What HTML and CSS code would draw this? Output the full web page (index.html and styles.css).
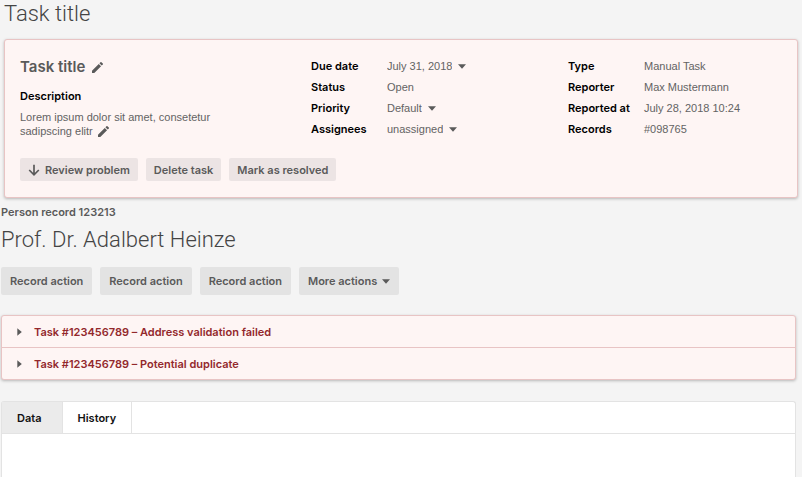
FILE: index.html
```html
<!DOCTYPE html>
<html lang="en">
<head>
<meta charset="utf-8">
<meta name="viewport" content="width=device-width, initial-scale=1">
<title>Task title</title>
<link rel="stylesheet" href="styles.css">
</head>
<body>
<svg class="sprite">
  <symbol id="pencil" viewBox="3 3 18 18"><path d="M3 17.250V21h3.750L17.810 9.940l-3.750-3.750L3 17.250zM20.710 7.040a1 1 0 0 0 0-1.410l-2.340-2.340a1 1 0 0 0-1.410 0l-1.830 1.830 3.750 3.750 1.830-1.830z"/></symbol>
  <symbol id="caret" viewBox="0 0 8 5"><path d="M0 .3H8L4 4.700Z"/></symbol>
  <symbol id="chevron" viewBox="0 0 5 8"><path d="M.3 .2V7.800L4.800 4Z"/></symbol>
  <symbol id="arrow-down" viewBox="0 0 12 12"><path d="M6 .8V10.500M1.200 6 6 10.800 10.800 6" fill="none" stroke="currentColor" stroke-width="1.700"/></symbol>
</svg>

<header class="page-head"><h1 class="heading">Task title</h1></header>

<main>
  <section class="task panel">
    <div class="task-grid">
      <div class="task-summary">
        <h2 class="task-title">Task title
          <button class="icon-button" type="button" aria-label="Edit title"><svg class="pencil"><use href="#pencil"/></svg></button>
        </h2>
        <h3 class="label">Description</h3>
        <p class="description">Lorem ipsum dolor sit amet, consetetur sadipscing elitr
          <button class="icon-button" type="button" aria-label="Edit description"><svg class="pencil"><use href="#pencil"/></svg></button>
        </p>
      </div>
      <div class="fields">
        <label class="label" for="due">Due date</label>
        <div class="value"><select id="due"><option>July 31, 2018</option></select><svg class="caret"><use href="#caret"/></svg></div>
        <span class="label">Status</span>
        <span class="value">Open</span>
        <label class="label" for="priority">Priority</label>
        <div class="value"><select id="priority"><option>Default</option></select><svg class="caret"><use href="#caret"/></svg></div>
        <label class="label" for="assignees">Assignees</label>
        <div class="value"><select id="assignees"><option>unassigned</option></select><svg class="caret"><use href="#caret"/></svg></div>
      </div>
      <div class="fields">
        <span class="label">Type</span><span class="value">Manual Task</span>
        <span class="label">Reporter</span><span class="value">Max Mustermann</span>
        <span class="label">Reported at</span><span class="value">July 28, 2018 10:24</span>
        <span class="label">Records</span><span class="value">#098765</span>
      </div>
    </div>
    <div class="actions task-actions">
      <button class="button" type="button"><svg class="arrow"><use href="#arrow-down"/></svg>Review problem</button>
      <button class="button" type="button">Delete task</button>
      <button class="button" type="button">Mark as resolved</button>
    </div>
  </section>

  <section class="record">
    <p class="record-id">Person record 123213</p>
    <h2 class="heading">Prof. Dr. Adalbert Heinze</h2>
    <div class="actions record-actions">
      <button class="button" type="button">Record action</button>
      <button class="button" type="button">Record action</button>
      <button class="button" type="button">Record action</button>
      <button class="button" type="button" aria-haspopup="menu">More actions<svg class="caret"><use href="#caret"/></svg></button>
    </div>

    <div class="panel issues">
      <details><summary><svg class="chevron"><use href="#chevron"/></svg>Task #123456789 – Address validation failed</summary></details>
      <details><summary><svg class="chevron"><use href="#chevron"/></svg>Task #123456789 – Potential duplicate</summary></details>
    </div>

    <div class="tabs">
      <div class="tab-list" role="tablist">
        <button class="tab tab-data" type="button" role="tab" aria-selected="false">Data</button>
        <button class="tab" type="button" role="tab" aria-selected="true">History</button>
      </div>
      <div class="tab-body" role="tabpanel"></div>
    </div>
  </section>
</main>
</body>
</html>
```
FILE: styles.css
```css
* { box-sizing: border-box; }

body {
  margin: 0;
  min-height: 100vh;
  display: flex;
  flex-direction: column;
  background: #f4f4f4;
  color: #5a5a5a;
  font: 11px/14px Inter, "Liberation Sans", sans-serif;
}

h1, h2, h3, p { margin: 0; }

button, select {
  margin: 0;
  padding: 0;
  border: 0;
  background: none;
  color: inherit;
  font: inherit;
}

svg { flex: none; fill: currentColor; }
.sprite { display: none; }

main, .record, .tabs {
  flex: 1;
  display: flex;
  flex-direction: column;
}
main { flex: 1 0 auto; }

.heading {
  color: #444;
  font-family: Roboto, "Liberation Sans", sans-serif;
  font-size: 22px;
  line-height: 26px;
  font-weight: 300;
}

.page-head { padding: 1px 4px 12px; }

.panel {
  border: 1px solid #e8c4c4;
  border-radius: 3px;
  background: #fef5f4;
  box-shadow: 0 1px 3px rgba(0, 0, 0, 0.25);
}

.task {
  flex: none;
  margin: 0 4px;
  padding: 16px 15px;
}

.task-grid {
  display: grid;
  grid-template-columns: 291fr 257fr 214fr;
}

.task-title {
  display: flex;
  align-items: center;
  gap: 7px;
  margin-bottom: 11px;
  font-size: 15px;
  line-height: 22px;
  font-weight: 600;
}

.label { color: #000; font-size: 11px; font-weight: 600; }
.task-summary .label { line-height: 14px; margin-bottom: 7px; }
.description, .value {
  color: #636363;
  font-family: "Liberation Sans", Arial, sans-serif;
}
.description { max-width: 210px; }
.description .icon-button { margin-left: 2px; vertical-align: -2px; }

.icon-button { display: inline-flex; color: #5a5a5a; }
.pencil { width: 11px; height: 11px; }

.fields {
  display: grid;
  grid-template-columns: 76px 1fr;
  grid-auto-rows: 21px;
  align-content: start;
  line-height: 21px;
}
.value { display: flex; align-items: center; gap: 6px; }
.value select { appearance: none; field-sizing: content; }
.caret { width: 8px; height: 5px; color: #5a5a5a; }

.actions { display: flex; gap: 8px; }
.task-actions { margin-top: 18px; }

.button {
  display: flex;
  align-items: center;
  height: 28px;
  padding: 0 9px;
  border-radius: 2px;
  background: #e3e3e3;
  font-weight: 600;
}
.button .caret { margin-left: 5px; }
.task .button { height: 23px; padding: 0 8px; background: #ece4e4; }
.arrow { width: 12px; height: 12px; margin-right: 5px; }

.record { padding: 7px 6px 0 1px; }
.record-id { margin-bottom: 8px; font-weight: 600; }
.record-actions { margin: 14px 0 20px; }

.issues details + details { border-top: 1px solid #e8c4c4; }
.issues summary {
  display: flex;
  align-items: center;
  gap: 12px;
  height: 31px;
  padding-left: 15px;
  color: #93282c;
  font-weight: 600;
}
.chevron { width: 5px; height: 8px; color: #5a5a5a; }

.tabs {
  margin-top: 21px;
  border: 1px solid #e3e3e3;
  border-bottom: 0;
  border-radius: 3px 3px 0 0;
  background: #fff;
}
.tab-list { display: flex; border-bottom: 1px solid #e3e3e3; }
.tab {
  height: 31px;
  padding: 0 15px;
  border-right: 1px solid #e3e3e3;
  color: #111;
  font-weight: 600;
}
.tab-data { padding-right: 20px; background: #ebebeb; }
.tab-body { flex: 1; }
```
